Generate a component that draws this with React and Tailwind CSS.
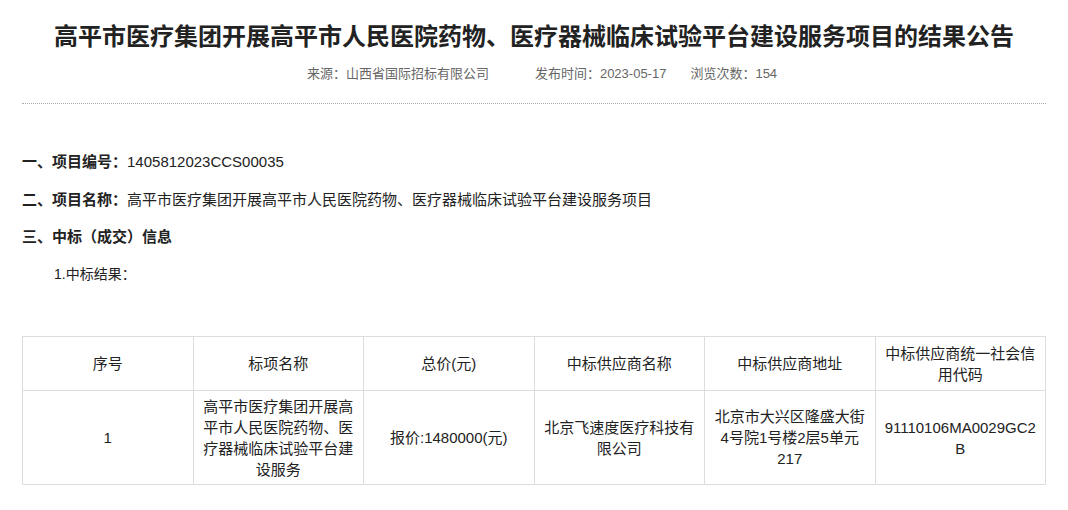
export default function App() {
  const cell = "border border-[#dddddd] px-2 text-center align-middle";
  return (
    <div className="w-[1068px] h-[510px] bg-white text-[#333] overflow-hidden" style={{ fontFamily: '"Liberation Sans", "Noto Sans CJK SC", sans-serif' }}>
      <div className="px-[22px]">
        <h1 className="pt-[20px] text-center text-[24px] leading-[34px] font-bold text-[#222]">高平市医疗集团开展高平市人民医院药物、医疗器械临床试验平台建设服务项目的结果公告</h1>
        <div className="mt-[10px] flex justify-center gap-[46px] text-[13px] leading-[20px] text-[#666] pl-[16px]">
          <span>来源：山西省国际招标有限公司</span>
          <span className="flex gap-[24px]"><span>发布时间：2023-05-17</span><span>浏览次数：154</span></span>
        </div>
        <div className="mt-[19px] border-t border-dotted border-[#aaa]"></div>
        <div className="mt-[46px] text-[15px] leading-[24px] text-[#222]">
          <p><b>一、项目编号：</b>1405812023CCS00035</p>
          <p className="mt-[14px]"><b>二、项目名称：</b>高平市医疗集团开展高平市人民医院药物、医疗器械临床试验平台建设服务项目</p>
          <p className="mt-[13px]"><b>三、中标（成交）信息</b></p>
          <p className="mt-[13px] pl-[32px] text-[14px]">1.中标结果：</p>
        </div>
        <table className="mt-[50px] w-full table-fixed border-collapse text-[15px] leading-[21px] text-[#222]">
          <tbody>
            <tr className="h-[54px]">
              <td className={cell}>序号</td>
              <td className={cell}>标项名称</td>
              <td className={cell}>总价(元)</td>
              <td className={cell}>中标供应商名称</td>
              <td className={cell}>中标供应商地址</td>
              <td className={cell}>中标供应商统一社会信用代码</td>
            </tr>
            <tr className="h-[94px]">
              <td className={cell}>1</td>
              <td className={cell}>高平市医疗集团开展高平市人民医院药物、医疗器械临床试验平台建设服务</td>
              <td className={cell}>报价:1480000(元)</td>
              <td className={cell}>北京飞速度医疗科技有限公司</td>
              <td className={cell}>北京市大兴区隆盛大街4号院1号楼2层5单元217</td>
              <td className={cell + " break-all"}>91110106MA0029GC2B</td>
            </tr>
          </tbody>
        </table>
      </div>
    </div>
  );
}
